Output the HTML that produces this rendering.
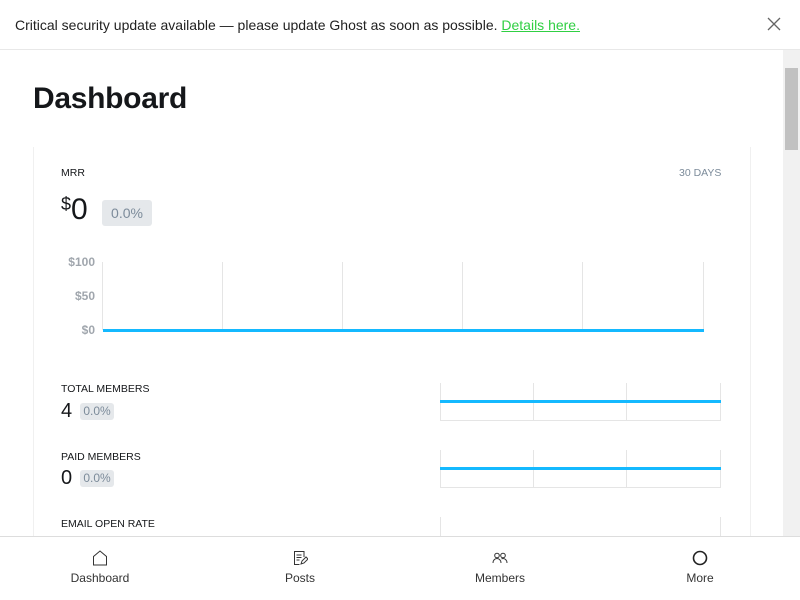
<!DOCTYPE html>
<html><head><style>
*{margin:0;padding:0;box-sizing:border-box}
body{width:800px;height:600px;overflow:hidden;background:#fff;font-family:"Liberation Sans",sans-serif;position:relative;color:#15171a}
.banner{position:absolute;left:0;top:0;width:800px;height:50px;border-bottom:1px solid #e8e8e8;font-size:14px;line-height:50px;padding-left:15px;color:#222}
.banner a{color:#30cf43;text-decoration:underline}
.x{position:absolute;right:19px;top:17px;width:14px;height:14px}
.sb{position:absolute;left:783px;top:50px;width:17px;height:486px;background:#f1f1f1}
.thumb{position:absolute;left:785px;top:68px;width:13px;height:82px;background:#c1c1c1}
h1{position:absolute;left:33px;top:82px;font-size:30px;font-weight:bold;letter-spacing:-0.3px}
.card{position:absolute;left:33px;top:147px;width:718px;height:400px;border-left:1px solid #f0f0f0;border-right:1px solid #f0f0f0}
.lbl{position:absolute;font-size:10.5px;color:#15171a}
.pill{display:inline-block;background:#e5e8eb;color:#7c8b9a;border-radius:3px}
.ax{position:absolute;font-size:12px;font-weight:bold;color:#a0a6ad;text-align:right;width:40px;left:55px}
.v{position:absolute;width:1px;background:#e5e5e5}
.blue{position:absolute;height:3px;background:#14b9ff}
.nav{position:absolute;left:0;top:536px;width:800px;height:64px;border-top:1px solid #ddd;background:#fff}
.ni{position:absolute;top:0;width:200px;text-align:center;font-size:12px;color:#333}
.ni svg{display:block;margin:13px auto 5px}
</style></head><body>
<div class="banner">Critical security update available — please update Ghost as soon as possible. <a>Details here.</a></div>
<svg class="x" viewBox="0 0 14 14"><path d="M1 1L13 13M13 1L1 13" stroke="#666" stroke-width="1.3"/></svg>
<div class="sb"></div><div class="thumb"></div>
<h1>Dashboard</h1>
<div class="card"></div>
<div class="lbl" style="left:61px;top:167px">MRR</div>
<div class="lbl" style="left:679px;top:167px;color:#7c8b9a">30 DAYS</div>
<div style="position:absolute;left:61px;top:193px;font-size:30px;line-height:34px"><span style="font-size:18px;vertical-align:top;line-height:22px">$</span>0</div>
<div class="pill" style="position:absolute;left:102px;top:200px;width:50px;height:26px;line-height:26px;text-align:center;font-size:14px">0.0%</div>
<div class="ax" style="top:255px">$100</div>
<div class="ax" style="top:289px">$50</div>
<div class="ax" style="top:323px">$0</div>
<div class="v" style="left:102px;top:262px;height:68px"></div>
<div class="v" style="left:222px;top:262px;height:68px"></div>
<div class="v" style="left:342px;top:262px;height:68px"></div>
<div class="v" style="left:462px;top:262px;height:68px"></div>
<div class="v" style="left:582px;top:262px;height:68px"></div>
<div class="v" style="left:703px;top:262px;height:68px"></div>
<div class="blue" style="left:103px;top:329px;width:601px"></div>

<div class="lbl" style="left:61px;top:383px">TOTAL MEMBERS</div>
<div style="position:absolute;left:61px;top:400px;font-size:20px">4</div>
<div class="pill" style="position:absolute;left:80px;top:403px;width:34px;height:17px;line-height:17px;text-align:center;font-size:12px">0.0%</div>
<div class="v" style="left:440px;top:383px;height:38px"></div><div class="v" style="left:533px;top:383px;height:38px"></div><div class="v" style="left:626px;top:383px;height:38px"></div><div class="v" style="left:720px;top:383px;height:38px"></div>
<div class="v" style="left:440px;top:420px;height:1px;width:281px"></div>
<div class="blue" style="left:440px;top:400px;width:281px"></div>

<div class="lbl" style="left:61px;top:451px">PAID MEMBERS</div>
<div style="position:absolute;left:61px;top:467px;font-size:20px">0</div>
<div class="pill" style="position:absolute;left:80px;top:470px;width:34px;height:17px;line-height:17px;text-align:center;font-size:12px">0.0%</div>
<div class="v" style="left:440px;top:450px;height:38px"></div><div class="v" style="left:533px;top:450px;height:38px"></div><div class="v" style="left:626px;top:450px;height:38px"></div><div class="v" style="left:720px;top:450px;height:38px"></div>
<div class="v" style="left:440px;top:487px;height:1px;width:281px"></div>
<div class="blue" style="left:440px;top:467px;width:281px"></div>

<div class="lbl" style="left:61px;top:518px">EMAIL OPEN RATE</div>
<div class="v" style="left:440px;top:517px;height:20px"></div><div class="v" style="left:720px;top:517px;height:20px"></div>

<div class="nav">
<div class="ni" style="left:0"><svg width="16" height="16" viewBox="0 0 16 16"><path d="M1.5 15V6.5L8 1l6.5 5.5V15z" fill="none" stroke="#333" stroke-width="1"/></svg>Dashboard</div>
<div class="ni" style="left:200px"><svg width="16" height="16" viewBox="0 0 16 16"><path d="M12 7V1.5H2.5V14.5h5M4.5 5h5M4.5 7.5h5M4.5 10h3M9 14l1-3 4-4 2 2-4 4z" fill="none" stroke="#333" stroke-width="1"/></svg>Posts</div>
<div class="ni" style="left:400px"><svg width="16" height="16" viewBox="0 0 16 16"><circle cx="5" cy="5.5" r="2.3" fill="none" stroke="#333"/><circle cx="11" cy="5.5" r="2.3" fill="none" stroke="#333"/><path d="M1 13c0-3 2-4.5 4-4.5s4 1.5 4 4.5M9.5 9c.5-.3 1-.5 1.5-.5 2 0 4 1.5 4 4.5" fill="none" stroke="#333"/></svg>Members</div>
<div class="ni" style="left:600px"><svg width="16" height="16" viewBox="0 0 16 16"><circle cx="8" cy="8" r="6.5" fill="none" stroke="#222" stroke-width="1.6"/></svg>More</div>
</div>
</body></html>
